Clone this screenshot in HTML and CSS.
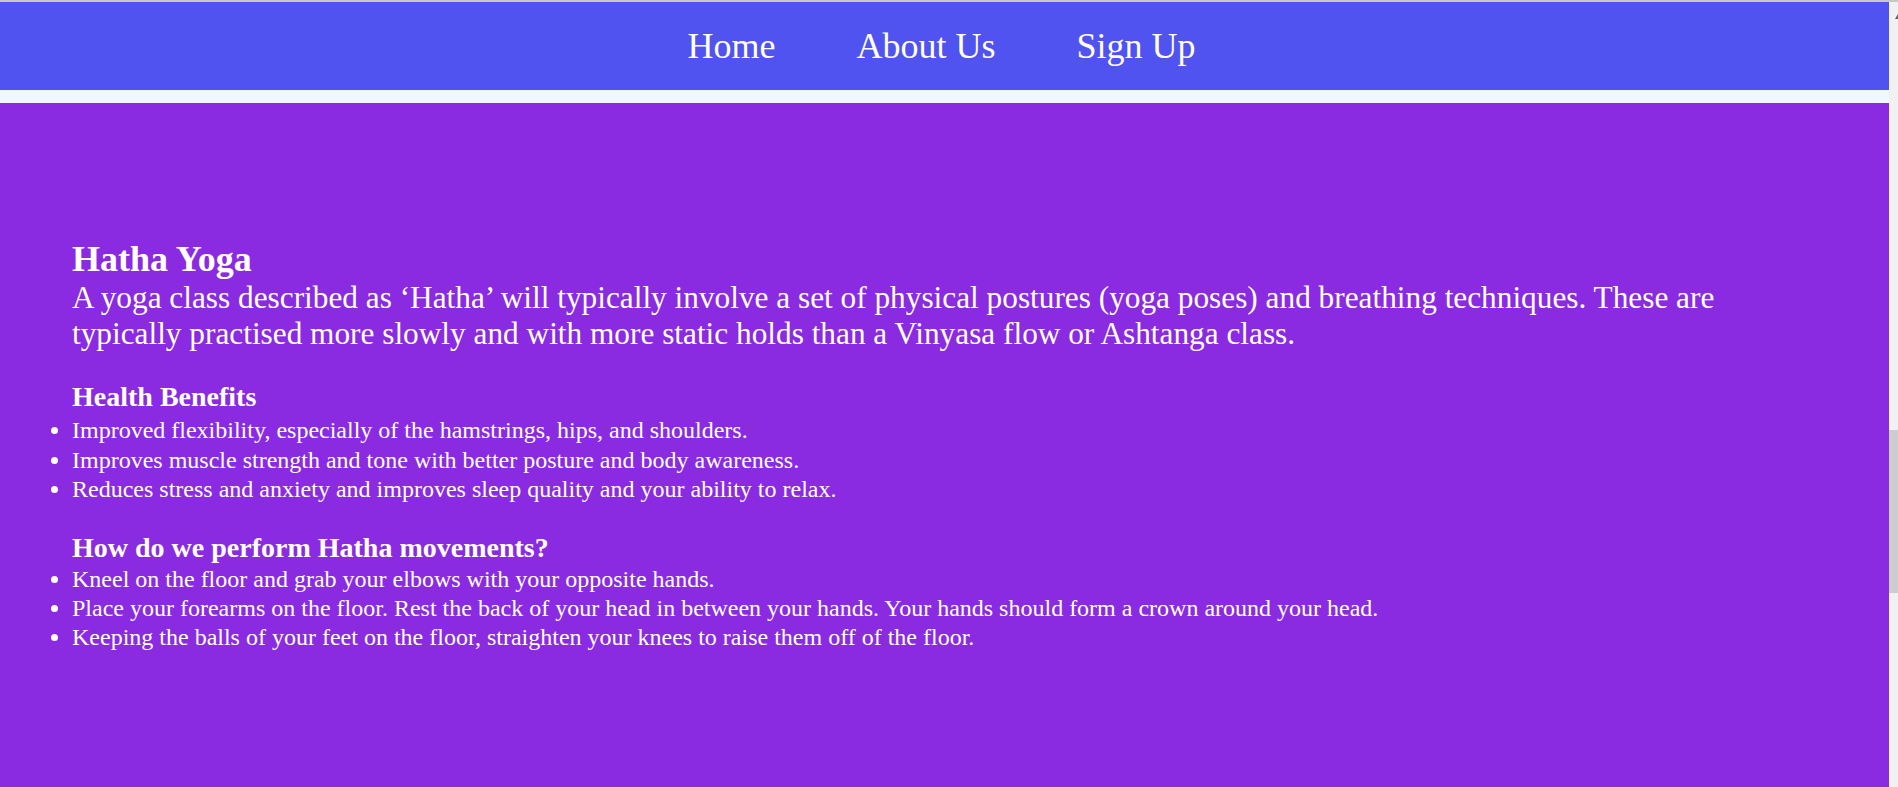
FILE: index.html
```html
<!DOCTYPE html>
<html lang="en">
<head>
<meta charset="utf-8">
<title>Hatha Yoga</title>
<link rel="stylesheet" href="styles.css">
</head>
<body>
<div class="topline"></div>
<div class="frame">
  <div class="page">
    <nav class="nav">
      <a class="nav-link" href="#">Home</a>
      <a class="nav-link" href="#">About Us</a>
      <a class="nav-link" href="#">Sign Up</a>
    </nav>
    <div class="band"></div>
    <main class="content">
      <h1 class="title">Hatha Yoga</h1>
      <p class="lead">A yoga class described as ‘Hatha’ will typically involve a set of physical postures (yoga poses) and breathing techniques. These are typically practised more slowly and with more static holds than a Vinyasa flow or Ashtanga class.</p>
      <h3 class="subhead first">Health Benefits</h3>
      <ul class="list">
        <li>Improved flexibility, especially of the hamstrings, hips, and shoulders.</li>
        <li>Improves muscle strength and tone with better posture and body awareness.</li>
        <li>Reduces stress and anxiety and improves sleep quality and your ability to relax.</li>
      </ul>
      <h3 class="subhead second">How do we perform Hatha movements?</h3>
      <ul class="list">
        <li>Kneel on the floor and grab your elbows with your opposite hands.</li>
        <li>Place your forearms on the floor. Rest the back of your head in between your hands. Your hands should form a crown around your head.</li>
        <li>Keeping the balls of your feet on the floor, straighten your knees to raise them off of the floor.</li>
      </ul>
    </main>
  </div>
  <div class="scrollbar">
    <svg class="arrow" width="9" height="20" viewBox="0 0 9 20"><polygon points="6,17 9,12 9,17" fill="#606060"/></svg>
    <div class="thumb"></div>
  </div>
</div>
</body>
</html>
```
FILE: styles.css
```css
html, body {
  margin: 0;
  padding: 0;
}
body {
  height: 787px;
  overflow: hidden;
  display: flex;
  flex-direction: column;
  font-family: "Liberation Serif", "Times New Roman", serif;
  background: #8a2be2;
}
.topline {
  height: 2px;
  background: #c8c8c8;
  flex: none;
}
.frame {
  flex: 1;
  display: flex;
  min-height: 0;
}
.page {
  flex: 1;
  display: flex;
  flex-direction: column;
}
.nav {
  height: 88px;
  flex: none;
  background: #5053ef;
  display: flex;
  justify-content: center;
  align-items: center;
  gap: 81px;
  padding-right: 6px;
}
.nav-link {
  color: #ffffff;
  text-decoration: none;
  font-size: 36px;
  line-height: 41.4px;
  position: relative;
  top: 1px;
}
.band {
  height: 13px;
  flex: none;
  background: #f0f8ff;
}
.content {
  flex: 1;
  background: #8a2be2;
  color: #ffffff;
  padding: 134.6px 150px 0 72px;
}
.title {
  margin: 0;
  font-size: 36px;
  font-weight: bold;
  line-height: 42.4px;
}
.lead {
  margin: 0;
  font-size: 31.3px;
  line-height: 36px;
}
.subhead {
  margin: 0;
  font-size: 28px;
  font-weight: bold;
  line-height: 32.2px;
}
.subhead.first {
  margin-top: 28.9px;
  margin-bottom: 3.4px;
}
.subhead.second {
  margin-top: 27.5px;
  margin-bottom: 1.2px;
}
.list {
  margin: 0;
  padding: 0;
  list-style: disc outside;
  font-size: 24px;
  line-height: 29.2px;
}
.scrollbar {
  width: 9px;
  flex: none;
  background: #f1f1f1;
  display: flex;
  flex-direction: column;
}
.arrow {
  display: block;
  flex: none;
}
.thumb {
  margin-top: 408px;
  height: 163px;
  background: #cdcdcd;
}
```
